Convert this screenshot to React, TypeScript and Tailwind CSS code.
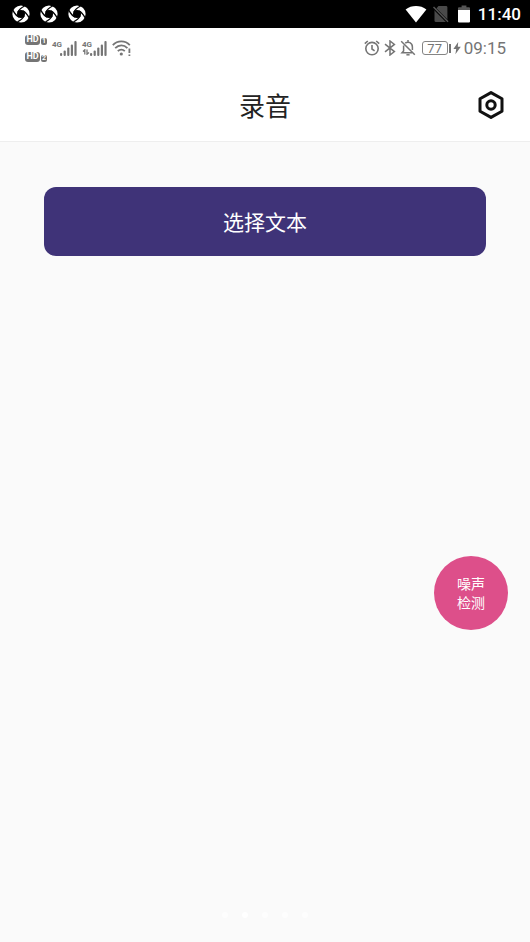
const LATIN = "font-['Roboto','Noto_Sans_CJK_SC',sans-serif]";
const CJK = "font-['Noto_Sans_CJK_SC',sans-serif]";

function ApertureIcon() {
  return (
    <svg width="18" height="18" viewBox="0 0 18 18" aria-hidden="true">
      <circle cx="9" cy="9" r="8.6" fill="#fff" />
      <circle cx="9" cy="9" r="4" fill="#000" />
      {[0, 90, 180, 270].map((angle) => (
        <path
          key={angle}
          d="M5.8 7.2C7 4.6 8.6 3 12.6 1"
          fill="none"
          stroke="#000"
          strokeWidth="1.3"
          transform={`rotate(${angle} 9 9)`}
        />
      ))}
    </svg>
  );
}

function HdBadge({ sim }: { sim: string }) {
  return (
    <span className="flex items-end gap-px">
      <span className="flex h-[10px] w-[15px] items-center justify-center rounded-[3px] bg-[#757575] text-[9px] leading-none font-bold text-white">
        HD
      </span>
      <span className="flex h-[7px] w-[6px] items-center justify-center rounded-[2px] bg-[#757575] text-[7px] leading-none font-bold text-white">
        {sim}
      </span>
    </span>
  );
}

function Signal({ data }: { data?: boolean }) {
  return (
    <span className="flex h-4 items-end">
      <span className="flex h-4 w-2 flex-col text-[8px] leading-[9px] font-bold">
        4G
        {data && (
          <svg width="9" height="6" viewBox="0 0 9 6" fill="none" stroke="#757575" strokeWidth="1.3" aria-hidden="true">
            <path d="M1 2.5L2.8 0.8V5.5M5 0.5V5.2L7 3.4" />
          </svg>
        )}
      </span>
      <svg width="17" height="16" viewBox="0 0 17 16" fill="#757575" aria-hidden="true">
        <rect x="0" y="13" width="2.2" height="3" rx="1" />
        <rect x="3.6" y="10.5" width="2.2" height="5.5" rx="1" />
        <rect x="7.2" y="7.5" width="2.2" height="8.5" rx="1" />
        <rect x="10.8" y="4.5" width="2.2" height="11.5" rx="1" />
        <rect x="14.4" y="1" width="2.2" height="15" rx="1" />
      </svg>
    </span>
  );
}

function SystemBar() {
  return (
    <div className="flex h-7 items-center justify-between bg-black pr-[9px] pl-3">
      <div className="flex gap-[10px]">
        <ApertureIcon />
        <ApertureIcon />
        <ApertureIcon />
      </div>
      <div className="flex items-center">
        <svg width="22" height="18" viewBox="0 0 22 18" fill="#fff" aria-hidden="true">
          <path d="M11 17.5L0.6 4.4C6.5-0.2 15.5-0.2 21.4 4.4Z" />
        </svg>
        <svg className="ml-1.5" width="16" height="18" viewBox="0 0 16 18" aria-hidden="true">
          <path d="M1.5 5.5L5.5 1H13a1.4 1.4 0 0 1 1.4 1.4V15.6A1.4 1.4 0 0 1 13 17H3a1.5 1.5 0 0 1-1.5-1.5Z" fill="#4a4a4a" />
          <path d="M0.5 2.5L15 17" stroke="#000" strokeWidth="3" />
          <path d="M0.5 2L15 16.8" stroke="#555" strokeWidth="1.5" />
        </svg>
        <svg className="ml-[9px]" width="12" height="18" viewBox="0 0 12 18" aria-hidden="true">
          <path d="M0 3.2a1 1 0 0 1 1-1h2.6V0.6h4.8v1.6H11a1 1 0 0 1 1 1V5H0Z" fill="#555" />
          <path d="M0 5H12V16.5a1 1 0 0 1-1 1H1a1 1 0 0 1-1-1Z" fill="#fff" />
        </svg>
        <span className="ml-2 text-[17px] leading-7 font-medium text-white">11:40</span>
      </div>
    </div>
  );
}

function PhoneBar() {
  return (
    <div className="flex h-10 items-center justify-between pr-6 pl-[25px] text-[#757575]">
      <div className="flex items-center">
        <div className="flex flex-col gap-[7px]">
          <HdBadge sim="1" />
          <HdBadge sim="2" />
        </div>
        <div className="ml-[5px] flex items-center gap-[5px]">
          <Signal />
          <Signal data />
          <svg width="20" height="17" viewBox="0 0 20 17" fill="none" stroke="#757575" strokeWidth="1.8" aria-hidden="true">
            <path d="M0.8 5.2C5.5 0.2 13.2 0.2 17.8 5.2M3.2 8.2C6.8 4.5 11.9 4.5 15.4 8.2M5.8 11.2C8 9 10.7 9 12.8 11.2" />
            <circle cx="9.3" cy="14" r="1.6" fill="#757575" stroke="none" />
            <path d="M17.4 8.5V13M17.4 14.4V16" />
          </svg>
        </div>
      </div>
      <div className="flex items-center">
        <svg width="16" height="16" viewBox="0 0 16 16" fill="none" stroke="#757575" strokeWidth="1.6" aria-hidden="true">
          <circle cx="8" cy="8.6" r="6.2" />
          <path d="M8 5v4l2.6 1.8M0.8 3.6L3.8 1M15.2 3.6L12.2 1" />
        </svg>
        <svg className="ml-1" width="12" height="16" viewBox="0 0 12 16" fill="none" stroke="#757575" strokeWidth="1.5" aria-hidden="true">
          <path d="M1 4.2L10.4 11.6L6 15V1L10.4 4.4L1 11.8" />
        </svg>
        <svg className="ml-1" width="16" height="16" viewBox="0 0 16 16" fill="none" stroke="#757575" strokeWidth="1.5" aria-hidden="true">
          <path d="M5.2 3.2C8.2 0.8 12.4 3 12.4 7V10M3.6 5.6V11L2 12.8H12M1.2 1.2L14.8 14.8M8 0V2" />
          <path d="M6.4 14.8H9.6" />
        </svg>
        <span className="ml-[6px] flex h-[14px] w-[26px] items-center justify-center rounded-[3px] border border-[#858585] text-[13px] leading-none">
          77
        </span>
        <span className="ml-px h-[9px] w-[2px] bg-[#757575]" />
        <svg className="ml-[2px]" width="8" height="14" viewBox="0 0 8 14" fill="#757575" aria-hidden="true">
          <path d="M5.2 1L0.4 8H3.2L2.4 13.2L7.8 5.8H4.8Z" />
        </svg>
        <span className="ml-[3px] text-[17px] leading-6">09:15</span>
      </div>
    </div>
  );
}

export default function App() {
  return (
    <div className={`flex min-h-screen flex-col bg-[#fafafa] ${LATIN}`}>
      <SystemBar />
      <header className="border-b border-[#eeeeee] bg-white">
        <PhoneBar />
        <div className="grid h-[73px] grid-cols-[1fr_auto_1fr] items-center px-6">
          <h1 className={`col-start-2 text-[26px] leading-9 text-[#222222] ${CJK}`}>录音</h1>
          <button type="button" aria-label="设置" className="justify-self-end">
            <svg width="30" height="30" viewBox="0 0 30 30" fill="none" stroke="#111" strokeWidth="3" strokeLinejoin="round" aria-hidden="true">
              <path d="M15 2.6L26 8.8V21.2L15 27.4L4 21.2V8.8Z" />
              <circle cx="15" cy="15" r="4.2" />
            </svg>
          </button>
        </div>
      </header>
      <main className="flex flex-1 flex-col px-11 pt-[45px]">
        <button type="button" className={`h-[69px] w-full rounded-xl bg-[#3f3378] text-[21px] text-white ${CJK}`}>
          选择文本
        </button>
      </main>
      <button
        type="button"
        className={`fixed right-[22px] bottom-[312px] flex h-[74px] w-[74px] flex-col items-center justify-center rounded-full bg-[#dd4f8a] text-[14px] leading-[19px] text-white ${CJK}`}
      >
        <span>噪声</span>
        <span>检测</span>
      </button>
      <div className="flex items-center justify-center gap-[14px] pb-6" aria-hidden="true">
        <span className="h-1.5 w-1.5 rounded-full bg-[#fdfdfd]" />
        <span className="h-1.5 w-1.5 rounded-full bg-white" />
        <span className="h-1.5 w-1.5 rounded-full bg-[#fdfdfd]" />
        <span className="h-1.5 w-1.5 rounded-full bg-[#fdfdfd]" />
        <span className="h-1.5 w-1.5 rounded-full bg-[#fdfdfd]" />
      </div>
    </div>
  );
}
